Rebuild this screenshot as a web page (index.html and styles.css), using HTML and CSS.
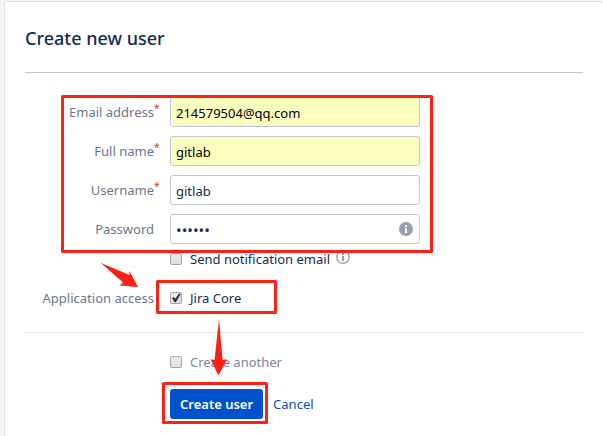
FILE: index.html
```html
<!DOCTYPE html>
<html lang="en">
<head>
<meta charset="utf-8">
<meta name="viewport" content="width=device-width, initial-scale=1">
<title>Create new user</title>
<link rel="stylesheet" href="styles.css">
</head>
<body>
<main class="panel">
  <h1 class="title">Create new user</h1>
  <form class="form">
    <div class="row">
      <label class="label" for="email">Email address<span class="required">*</span></label>
      <input class="text filled" id="email" type="text" value="214579504@qq.com">
    </div>
    <div class="row">
      <label class="label" for="fullname">Full name<span class="required">*</span></label>
      <input class="text filled" id="fullname" type="text" value="gitlab">
    </div>
    <div class="row">
      <label class="label" for="username">Username<span class="required">*</span></label>
      <input class="text" id="username" type="text" value="gitlab">
    </div>
    <div class="row">
      <label class="label" for="password">Password</label>
      <div class="password">
        <input class="text" id="password" type="password" value="gitlab">
        <svg class="info-solid" viewBox="0 0 14 14" aria-hidden="true"><circle cx="7" cy="7" r="7" fill="#97a0af"/><path d="M6 3h2v2H6zM6 6h2v5H6z" fill="#fff"/></svg>
      </div>
    </div>
    <div class="row check-row">
      <div class="check">
        <input class="box" id="notify" type="checkbox">
        <label for="notify">Send notification email</label>
        <svg class="info-outline" viewBox="0 0 14 14" aria-hidden="true"><circle cx="7" cy="7" r="6.2" fill="none" stroke="#97a0af" stroke-width="1.4"/><path d="M6 3h2v2H6zM6 6h2v5H6z" fill="#97a0af"/></svg>
      </div>
    </div>
    <div class="row access-row">
      <span class="label">Application access</span>
      <div class="check">
        <input class="box" id="jira" type="checkbox" checked>
        <label for="jira">Jira Core</label>
      </div>
    </div>
    <div class="footer">
      <div class="check muted">
        <input class="box" id="another" type="checkbox">
        <label for="another">Create another</label>
      </div>
      <div class="actions">
        <button class="submit" type="button">Create user</button>
        <a class="cancel" href="#">Cancel</a>
      </div>
    </div>
    <svg class="marks" viewBox="0 0 420 340" aria-hidden="true">
      <g fill="none" stroke="#ff2015" stroke-width="3" stroke-linejoin="round">
        <rect x="37.5" y="23.5" width="369" height="155"/>
        <rect x="132.5" y="208.5" width="118" height="31"/>
        <rect x="138.5" y="310.5" width="103" height="39"/>
      </g>
      <g fill="#ff2015">
        <path d="M75.5 189.7 L104.5 202 L104.5 198 L113 214 L94.5 212.5 L98 209.5 Z"/>
        <path d="M194 246 L197.6 287 L202 286.3 L193.5 302.5 L185.5 286.3 L189.5 287 Z"/>
      </g>
    </svg>
  </form>
</main>
</body>
</html>
```
FILE: styles.css
```css
* {
  box-sizing: border-box;
}

body {
  margin: 0;
  padding: 1px 0 0 4px;
  background: #f4f5f7;
  color: #172b4d;
  font: 13px/20px "Noto Sans", "Open Sans", sans-serif;
}

.panel {
  min-height: calc(100vh - 1px);
  padding: 24px 20px 0;
  background: #fff;
  border: 1px solid #dfe1e6;
  border-width: 1px 0 0 1px;
  border-radius: 3px 3px 0 0;
}

.title {
  margin: 0;
  padding-bottom: 22px;
  border-bottom: 1px solid #c1c7d0;
  font-size: 18px;
  font-weight: 500;
  line-height: 24px;
}

.form {
  position: relative;
  padding-top: 24px;
}

.row {
  display: grid;
  grid-template-columns: 129px minmax(0, 250px);
  column-gap: 16px;
  align-items: center;
  margin-bottom: 9px;
}

.label {
  position: relative;
  color: #6b778c;
  text-align: right;
  white-space: nowrap;
}

.required {
  position: absolute;
  left: 100%;
  top: -4px;
  color: #de350b;
  font-size: 10px;
}

.text {
  width: 100%;
  height: 30px;
  padding: 2px 5px 0;
  border: 1px solid #c1c7d0;
  border-radius: 3px;
  background: #fff;
  color: #172b4d;
  font: inherit;
}

.filled {
  background: #faffbd;
  color: #000;
}

.password {
  position: relative;
}

.password .text {
  display: block;
  font-size: 15px;
}

.info-solid {
  position: absolute;
  top: 8px;
  right: 7px;
  width: 14px;
  height: 14px;
}

.check {
  grid-column: 2;
  display: flex;
  align-items: center;
}

.check-row {
  margin: -4px 0 19px;
}

.access-row {
  margin-bottom: 24px;
}

.box {
  appearance: none;
  width: 12px;
  height: 12px;
  margin: 0 8px 0 0;
  border: 1px solid #a6a6a6;
  border-radius: 2px;
  background: linear-gradient(#eee, #ddd);
}

.box:checked::before {
  content: "";
  display: block;
  width: 10px;
  height: 10px;
  background: #333;
  clip-path: polygon(10% 50%, 28% 40%, 42% 58%, 80% 5%, 98% 12%, 48% 92%, 36% 92%);
}

.info-outline {
  width: 14px;
  height: 14px;
  margin: 0 0 4px 6px;
}

.footer {
  padding: 19px 0 0 145px;
  border-top: 1px solid #dfe1e6;
}

.muted {
  color: #7a869a;
}

.actions {
  display: flex;
  align-items: center;
  gap: 10px;
  margin-top: 17px;
}

.submit {
  height: 30px;
  padding: 0 10px;
  border: 0;
  border-radius: 3px;
  background: #0052cc;
  color: #fff;
  font: inherit;
  font-weight: 600;
}

.cancel {
  color: #0052cc;
  text-decoration: none;
}

.marks {
  position: absolute;
  top: 0;
  left: 0;
  width: 420px;
  height: 340px;
  overflow: visible;
  pointer-events: none;
}
```
